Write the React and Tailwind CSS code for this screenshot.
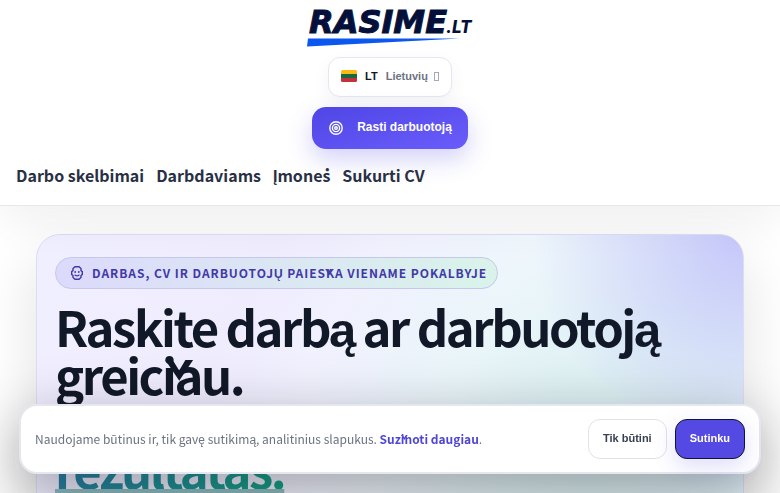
import React from 'react';

const NAV_LINKS = [
    { label: 'Darbo skelbimai', href: '#skelbimai' },
    { label: 'Darbdaviams', href: '#darbdaviams' },
    { label: 'Įmonės', href: '#imones' },
    { label: 'Sukurti CV', href: '#cv' },
];

const Logo = () => (
    <a href="#home" aria-label="Rasime.lt" className="block">
        <svg width="168" height="38" viewBox="0 0 168 38" className="overflow-visible">
            <text x="3" y="24" fill="#04103a" stroke="#04103a" strokeWidth="1" className="font-['DejaVu_Sans'] text-[32px] font-bold italic">RASIME</text>
            <text x="140" y="24" fill="#04103a" className="font-['Inter'] text-[17px] font-extrabold italic">.LT</text>
            <path d="M2 29.500 L154 29.500 L1 37.500 Z" fill="#0b57f0" />
        </svg>
    </a>
);

const Flag = () => (
    <svg width="16" height="12" viewBox="0 0 16 12">
        <clipPath id="flag"><rect width="16" height="12" rx="1.5" /></clipPath>
        <g clipPath="url(#flag)">
            <rect width="16" height="4" fill="#fdb913" />
            <rect y="4" width="16" height="4" fill="#17693f" />
            <rect y="8" width="16" height="4" fill="#c1323a" />
        </g>
    </svg>
);

const CaretBox = () => (
    <svg width="5" height="9" viewBox="0 0 5 9" fill="none" stroke="#a3a9b6" aria-hidden="true">
        <rect x=".5" y=".5" width="4" height="8" />
    </svg>
);

const TargetIcon = () => (
    <svg width="14" height="14" viewBox="0 0 14 14" fill="none" stroke="currentColor" strokeWidth="1.4">
        <circle cx="7" cy="7" r="6.2" />
        <circle cx="7" cy="7" r="3.6" />
        <circle cx="7" cy="7" r="1.3" />
    </svg>
);

const RobotIcon = () => (
    <svg width="12" height="14" viewBox="0 0 12 14" fill="none" stroke="currentColor" strokeWidth="1.4">
        <path d="M4 .7h4L10 2.500v2.200l1.300.9v3L10 9.500v2L8 13.300H4L2 11.500v-2L.7 8.600v-3L2 4.700V2.500z" />
        <path d="M3.700 8.600c.5 1.700 4.100 1.700 4.600 0" />
        <circle cx="4.200" cy="6" r=".9" fill="currentColor" stroke="none" />
        <circle cx="7.800" cy="6" r=".9" fill="currentColor" stroke="none" />
    </svg>
);

const Header = () => (
    <header className="relative z-10 border-b border-[#e5e7eb] bg-white px-4 pt-[9px] shadow-[0_16px_40px_rgba(15,15,20,0.06)]">
        <div className="flex flex-col items-center gap-2.5">
            <Logo />
            <button type="button" className="flex h-10 items-center rounded-xl border border-[#e2e8f0] bg-white px-3 pb-0.5 font-['Liberation_Sans',sans-serif] text-[11px] font-bold text-[#6b7280] shadow-[0_6px_18px_rgba(15,23,42,0.05)]">
                <Flag />
                <span className="ml-2 text-[#0f172a]">LT</span>
                <span className="ml-2">Lietuvių</span>
                <span className="ml-1.5"><CaretBox /></span>
            </button>
            <button type="button" className="flex h-[42px] items-center rounded-[14px] bg-linear-to-br from-[#4f46e5] to-[#6a5cfb] px-4 font-['Liberation_Sans',sans-serif] text-xs font-bold text-white shadow-[0_10px_24px_rgba(79,70,229,0.25)]">
                <span className="mr-3.5 ml-px"><TargetIcon /></span>
                <span className="pb-0.5">Rasti darbuotoją</span>
            </button>
        </div>
        <nav className="flex gap-3 pt-3.5 pb-[18px] text-base leading-6 font-bold text-[#283044]">
            {NAV_LINKS.map((link) => (
                <a key={link.href} href={link.href}>{link.label}</a>
            ))}
        </nav>
    </header>
);

const Hero = () => (
    <main className="px-9 pt-7">
        <section className="min-h-[500px] rounded-3xl border border-[#dcdcf6] bg-[radial-gradient(circle_at_100%_0%,rgba(99,82,246,0.28),transparent_210px),radial-gradient(circle_at_75%_200px,rgba(20,184,130,0.09),transparent_260px),linear-gradient(120deg,#f0efff_0%,#efecfe_25%,#f4f8ff_50%,#e2f0f8_100%)] px-[18px] pt-[22px] shadow-[0_24px_60px_rgba(15,15,20,0.12)]">
            <p className="inline-flex h-8 items-center gap-[9px] rounded-full border border-[#c5c8e8] bg-linear-to-r from-[#dcdafb] to-[#d9f3ea] pr-2.5 pl-[15px] text-xs font-bold tracking-[0.08em] text-[#4338a8]">
                <RobotIcon />
                DARBAS, CV IR DARBUOTOJŲ PAIEŠKA VIENAME POKALBYJE
            </p>
            <h1 className="mt-[13px] text-[49px] leading-12 font-bold tracking-tighter text-[#111827]">
                Raskite darbą ar darbuotoją greičiau.
                <span className="mt-[46px] block w-fit bg-linear-to-r from-[#2680a4] to-[#12a184] bg-clip-text text-transparent underline decoration-[#8dbdc0] decoration-8 underline-offset-0 [text-decoration-skip-ink:none]">
                    rezultatas.
                </span>
            </h1>
        </section>
    </main>
);

const CookieBar = () => (
    <div className="fixed inset-x-[19px] bottom-[19px] z-20 flex items-center justify-between gap-4 rounded-[18px] border-2 border-[#e5e7ee] bg-white px-3.5 py-[13px] shadow-[0_18px_60px_rgba(15,15,20,0.38)]">
        <p className="text-xs leading-5 text-[#6b7280]">
            Naudojame būtinus ir, tik gavę sutikimą, analitinius slapukus.{' '}
            <a href="#slapukai" className="font-bold text-[#4f46d5]">Sužinoti daugiau</a>.
        </p>
        <div className="flex shrink-0 gap-2 font-['Liberation_Sans',sans-serif] text-[11px] font-bold">
            <button type="button" className="h-10 rounded-xl border border-[#dfe3ea] bg-white px-3.5 pb-0.5 text-[#374151]">Tik būtini</button>
            <button type="button" className="h-10 rounded-xl border border-[#0f172a] bg-[#5549e4] px-3.5 pb-0.5 text-white shadow-[0_8px_22px_rgba(79,70,229,0.18)]">Sutinku</button>
        </div>
    </div>
);

const App = () => {
    return (
        <div className="h-screen overflow-hidden bg-white font-['Noto_Sans_CJK_JP','Liberation_Sans',sans-serif]">
            <Header />
            <Hero />
            <CookieBar />
        </div>
    );
};

export default App;
